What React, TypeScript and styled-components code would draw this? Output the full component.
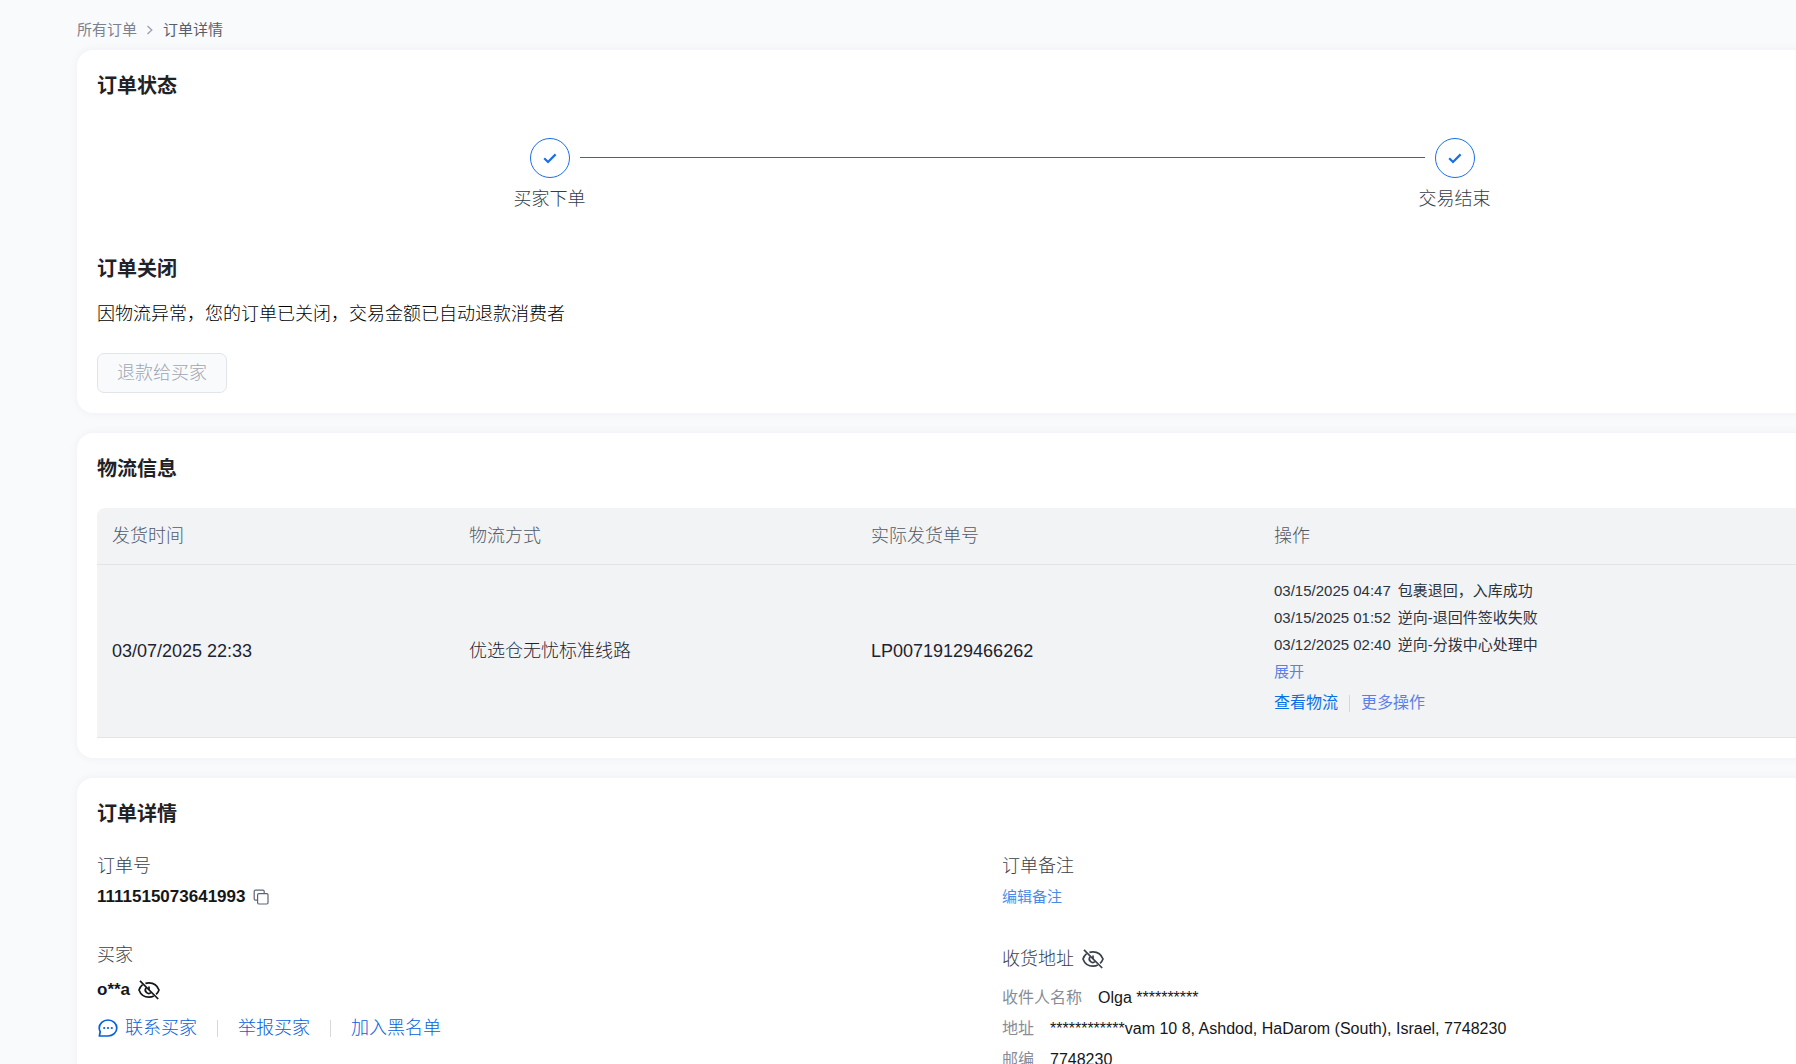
import React from 'react';
import styled, { createGlobalStyle } from 'styled-components';

const GlobalStyle = createGlobalStyle`
  *, *::before, *::after { box-sizing: border-box; }
  body {
    margin: 0;
    background: #f9fafc;
    color: #14171a;
    font-family: "Liberation Sans", "Noto Sans CJK SC", sans-serif;
    font-size: 18px;
    line-height: 26px;
    font-weight: 300;
  }
  h1, h2, p, dl, dd, dt, ol, ul { margin: 0; padding: 0; }
  a { text-decoration: none; }
  button { font: inherit; color: inherit; padding: 0; border: 0; background: none; cursor: pointer; }
`;

const Page = styled.main`
  height: 100vh;
  overflow: auto;
  scrollbar-width: none;
  padding: 17px 0 0 77px;
`;

const Breadcrumb = styled.nav`
  display: flex;
  align-items: center;
  gap: 9px;
  height: 26px;
  margin-bottom: 7px;
  font-size: 15px;
  font-weight: 400;
  color: #565f6c;
`;

const CrumbLink = styled.a`
  color: #7b828e;
`;

const Sections = styled.div`
  display: flex;
  flex-direction: column;
  gap: 20px;
  min-width: 1850px;
`;

const Card = styled.section`
  padding: 20px;
  border-radius: 16px;
  background: #fff;
  box-shadow: 0 0 10px rgba(30, 40, 60, 0.05);
`;

const Title = styled.h2`
  padding-top: 2px;
  font-size: 20px;
  line-height: 28px;
  font-weight: 700;
  color: #1f2226;
`;

const Steps = styled.ol`
  display: flex;
  list-style: none;
  padding: 38px 0 41px;
`;

const Step = styled.li`
  flex: 1;
  display: flex;
  flex-direction: column;
  gap: 8px;
  color: #343c48;
  text-align: center;
`;

const StepTrack = styled.div`
  display: grid;
  grid-template-columns: 1fr 40px 1fr;
  align-items: center;
  gap: 10px;
`;

const StepLine = styled.span<{ $visible: boolean }>`
  height: 2px;
  border-top: 1px solid ${(p) => (p.$visible ? '#1a6fc4' : 'transparent')};
`;

const StepCircle = styled.span`
  display: grid;
  place-items: center;
  height: 40px;
  border: 1px solid #1a6fe8;
  border-radius: 50%;
  color: #1a6fe8;
`;

const Message = styled.p`
  margin: 18px 0 26px;
  color: #000;
`;

const RefundButton = styled.button`
  height: 40px;
  padding: 0 19px;
  border: 1px solid #e1e5ea;
  border-radius: 7px;
  background: #f9fafc;
  color: #9fa6b1;
  cursor: not-allowed;
`;

const Table = styled.table`
  width: 100%;
  margin-top: 25px;
  border-spacing: 0;
  table-layout: fixed;
  border-radius: 8px 8px 0 0;
  overflow: hidden;
  background: #f2f3f5;
  text-align: left;
`;

const Th = styled.th`
  height: 57px;
  padding: 0 15px;
  border-bottom: 1px solid #e2e4e7;
  font-weight: 300;
  color: #525a67;
`;

const Td = styled.td`
  padding: 12px 15px;
  border-bottom: 1px solid #e2e4e7;
  color: #1d2430;
  vertical-align: middle;
`;

const Tracking = styled.ul`
  list-style: none;
  font-size: 15px;
  line-height: 27px;
  font-weight: 400;
  color: #2b3340;
`;

const TrackingItem = styled.li`
  display: flex;
  gap: 7px;
`;

const ExpandButton = styled.button`
  display: block;
  font-size: 15px;
  line-height: 27px;
  font-weight: 400;
  color: #5b7fe8;
`;

const RowActions = styled.div`
  display: flex;
  align-items: center;
  gap: 11px;
  margin: 4px 0 8px;
  font-size: 16px;
  line-height: 28px;
  font-weight: 400;
`;

const Divider = styled.span`
  width: 1px;
  height: 17px;
  background: #d5d9df;
`;

const Action = styled.button<{ $soft?: boolean }>`
  display: inline-flex;
  align-items: center;
  gap: 7px;
  color: ${(p) => (p.$soft ? '#5b7fe8' : '#0560dc')};
`;

const ActionLink = styled.a`
  color: #0b6ee8;
`;

const Columns = styled.div`
  display: grid;
  grid-template-columns: 1fr 1fr;
  margin-top: 25px;
`;

const Label = styled.div`
  display: flex;
  align-items: center;
  gap: 8px;
  color: #3a414c;
`;

const Strong = styled.div`
  display: flex;
  align-items: center;
  gap: 8px;
  font-size: 17px;
  font-weight: 700;
`;

const Field = styled.div<{ $gap: number }>`
  display: flex;
  flex-direction: column;
  gap: ${(p) => p.$gap}px;
`;

const Column = styled.div<{ $gap: number }>`
  display: flex;
  flex-direction: column;
  gap: ${(p) => p.$gap}px;
`;

const IconButton = styled.button`
  display: grid;
  place-items: center;
`;

const BuyerActions = styled.div`
  display: flex;
  align-items: center;
  gap: 20px;
  padding: 3px 0 0 1px;
`;

const NoteButton = styled.button`
  align-self: flex-start;
  font-size: 15px;
  font-weight: 400;
  color: #4a8be8;
`;

const Address = styled.dl`
  font-size: 16px;
  line-height: 31px;
  font-weight: 400;
`;

const AddressRow = styled.div`
  display: flex;
  gap: 16px;
  dt { color: #868d99; }
`;

const CheckIcon = () => (
  <svg width="14" height="12" viewBox="0 0 14 12" fill="none" stroke="currentColor" strokeWidth="2.2" aria-hidden="true">
    <path d="M1.2 6.2 5 10 12.6 2.4" />
  </svg>
);

const ChevronIcon = () => (
  <svg width="8" height="12" viewBox="0 0 8 12" fill="none" stroke="#9aa1ad" strokeWidth="1.3" aria-hidden="true">
    <path d="M1.5 2 5.8 6 1.5 10" />
  </svg>
);

const CopyIcon = () => (
  <svg width="16" height="16" viewBox="0 0 16 16" fill="none" stroke="#5c6573" strokeWidth="1.2" aria-hidden="true">
    <rect x="4.6" y="4.6" width="10.4" height="10.4" rx="1.2" />
    <path d="M4.4 11.2H2.4A1.2 1.2 0 0 1 1.2 10V2.4A1.2 1.2 0 0 1 2.4 1.2H10A1.2 1.2 0 0 1 11.2 2.4V4.4" />
  </svg>
);

const EyeOffIcon = () => (
  <svg width="22" height="20" viewBox="0 0 22 20" fill="none" stroke="currentColor" strokeWidth="1.7" aria-hidden="true">
    <path d="M4.6 4.6C3 5.900 1.700 7.800 1 10c1.600 4.400 5.600 7.200 10 7.200 1.700 0 3.400-.4 4.800-1.200" />
    <path d="M7.400 3.400C8.500 3 9.700 2.800 11 2.800c4.400 0 8.400 2.800 10 7.200-.6 1.700-1.600 3.200-2.900 4.400" />
    <path d="M8.200 7.800a3.400 3.400 0 0 0 4.900 4.700M11 6.600V10" />
    <path d="M2 .8 20.200 19" />
  </svg>
);

const ChatIcon = () => (
  <svg width="20" height="18" viewBox="0 0 20 18" fill="none" stroke="currentColor" strokeWidth="1.7" aria-hidden="true">
    <path d="M1.400 17 2.200 12.600A7.600 7.600 0 0 1 1.200 9C1.200 4.600 5.100 1 10 1s8.800 3.600 8.800 8-3.900 8-8.800 8Z" strokeLinejoin="round" />
    <g fill="currentColor" stroke="none">
      <circle cx="6.200" cy="9" r="1.100" />
      <circle cx="10" cy="9" r="1.100" />
      <circle cx="13.800" cy="9" r="1.100" />
    </g>
  </svg>
);

const steps = ['买家下单', '交易结束'];

const events = [
  { time: '03/15/2025 04:47', text: '包裹退回，入库成功' },
  { time: '03/15/2025 01:52', text: '逆向-退回件签收失败' },
  { time: '03/12/2025 02:40', text: '逆向-分拨中心处理中' },
];

const address = [
  { label: '收件人名称', value: 'Olga **********' },
  { label: '地址', value: '************vam 10 8, Ashdod, HaDarom (South), Israel, 7748230' },
  { label: '邮编', value: '7748230' },
];

export default function App() {
  return (
    <>
      <GlobalStyle />
      <Page>
        <Breadcrumb>
          <CrumbLink href="#orders">所有订单</CrumbLink>
          <ChevronIcon />
          <span>订单详情</span>
        </Breadcrumb>
        <Sections>
          <Card>
            <Title>订单状态</Title>
            <Steps>
              {steps.map((name, i) => (
                <Step key={name}>
                  <StepTrack>
                    <StepLine $visible={i > 0} />
                    <StepCircle>
                      <CheckIcon />
                    </StepCircle>
                    <StepLine $visible={i < steps.length - 1} />
                  </StepTrack>
                  {name}
                </Step>
              ))}
            </Steps>
            <Title>订单关闭</Title>
            <Message>因物流异常，您的订单已关闭，交易金额已自动退款消费者</Message>
            <RefundButton disabled>退款给买家</RefundButton>
          </Card>

          <Card>
            <Title>物流信息</Title>
            <Table>
              <colgroup>
                <col width="357" />
                <col width="402" />
                <col width="403" />
                <col />
              </colgroup>
              <thead>
                <tr>
                  <Th>发货时间</Th>
                  <Th>物流方式</Th>
                  <Th>实际发货单号</Th>
                  <Th>操作</Th>
                </tr>
              </thead>
              <tbody>
                <tr>
                  <Td>03/07/2025 22:33</Td>
                  <Td>优选仓无忧标准线路</Td>
                  <Td>LP00719129466262</Td>
                  <Td>
                    <Tracking>
                      {events.map((e) => (
                        <TrackingItem key={e.time}>
                          <span>{e.time}</span>
                          <span>{e.text}</span>
                        </TrackingItem>
                      ))}
                    </Tracking>
                    <ExpandButton>展开</ExpandButton>
                    <RowActions>
                      <ActionLink href="#tracking">查看物流</ActionLink>
                      <Divider />
                      <Action $soft>更多操作</Action>
                    </RowActions>
                  </Td>
                </tr>
              </tbody>
            </Table>
          </Card>

          <Card>
            <Title>订单详情</Title>
            <Columns>
              <Column $gap={32}>
                <Field $gap={5}>
                  <Label>订单号</Label>
                  <Strong>
                    1111515073641993
                    <IconButton aria-label="复制订单号">
                      <CopyIcon />
                    </IconButton>
                  </Strong>
                </Field>
                <Field $gap={9}>
                  <Label>买家</Label>
                  <Strong>
                    o**a
                    <IconButton aria-label="显示买家">
                      <EyeOffIcon />
                    </IconButton>
                  </Strong>
                  <BuyerActions>
                    <Action>
                      <ChatIcon />
                      联系买家
                    </Action>
                    <Divider />
                    <Action>举报买家</Action>
                    <Divider />
                    <Action>加入黑名单</Action>
                  </BuyerActions>
                </Field>
              </Column>
              <Column $gap={36}>
                <Field $gap={5}>
                  <Label>订单备注</Label>
                  <NoteButton>编辑备注</NoteButton>
                </Field>
                <Field $gap={10}>
                  <Label>
                    收货地址
                    <IconButton aria-label="显示收货地址">
                      <EyeOffIcon />
                    </IconButton>
                  </Label>
                  <Address>
                    {address.map((row) => (
                      <AddressRow key={row.label}>
                        <dt>{row.label}</dt>
                        <dd>{row.value}</dd>
                      </AddressRow>
                    ))}
                  </Address>
                </Field>
              </Column>
            </Columns>
          </Card>
        </Sections>
      </Page>
    </>
  );
}
